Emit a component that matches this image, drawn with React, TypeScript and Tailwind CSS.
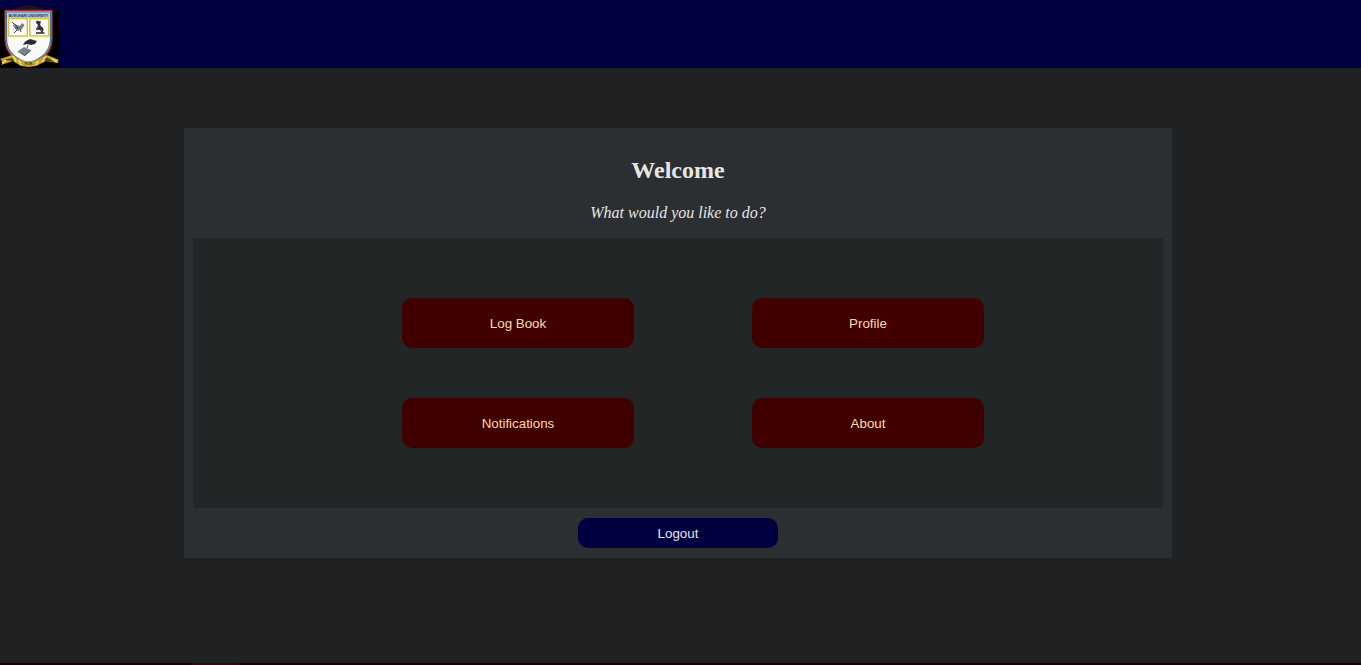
const actions = ["Log Book", "Profile", "Notifications", "About"];

function Crest() {
  return (
    <svg width="59" height="63" viewBox="0 5 59 63" className="block" aria-label="University crest">
      <ellipse cx="29" cy="19" rx="20" ry="14" fill="#15171c" />
      <rect x="0" y="10" width="59" height="58" fill="#000" />
      <path d="M5 10.500H52V39C52 51 44 61 28.500 64C13 61 5 51 5 39Z" fill="#d9bc34" stroke="#b3202c" strokeWidth="1.300" />
      <path d="M6.500 12.500H50.500V39C50.500 50 43 59 28.500 62.500C14 59 6.500 50 6.500 39Z" fill="#fafafa" stroke="#3b7da9" strokeWidth="1.300" />
      <rect x="7" y="12.500" width="43" height="5.500" fill="#a9cbdb" />
      <text x="28.500" y="16.800" textAnchor="middle" fontFamily="Liberation Sans, sans-serif" fontWeight="700" fontSize="3.400" fill="#103d62">BOROHARI UNIVERSITY</text>
      <rect x="8.500" y="18.600" width="18.800" height="17.400" fill="#fafafa" stroke="#e0c22c" strokeWidth="1.500" />
      <rect x="29.800" y="18.600" width="19" height="17.400" fill="#fafafa" stroke="#e0c22c" strokeWidth="1.500" />
      <path d="M12 22L17 25L20 26L22 23L24.500 25L22 29L18 31L14 28L16 26Z" fill="#777b80" />
      <path d="M12 22L18 28M13 25L18 29M17 30L14 33M20 29L21 32" stroke="#42464b" strokeWidth="1" />
      <path d="M36.500 20.500L41 21.500L40 25L43 28L41 31L37 28L38 25L36 23Z" fill="#34363b" />
      <path d="M36 29H40M36 33H44.500M42 28Q44 30 41 32" fill="none" stroke="#24272d" strokeWidth="1.500" />
      <path d="M26 41L30 39L37 41L35 44L31 45L27 44L23 45L24 43Z" fill="#292d32" />
      <path d="M18 51L24 47L31 50L25 56Z" fill="#7d8388" />
      <path d="M18 51.500L24.500 55.500L31 50.500M28 45L27 48" fill="none" stroke="#43484e" strokeWidth="0.900" />
      <path d="M0 59L12 55L18 59L24 61H34L40 59L47 55L58.500 59.500L58 63L46 61L36 66L29 67L21 66L13 61L1 65L3 62Z" fill="#c9a527" />
      <path d="M3 60L12 58L17 62L10 60.500M41 60L47 57.500L55 62L45 60.500Z" fill="#4d3e0e" />
      <path d="M13 56L16 62M19 60L21 65M38 61L36 65M46 56L42 62M2 63L6 60M52 59L57 62" stroke="#f5d94c" strokeWidth="2" />
      <text x="28.500" y="64.700" textAnchor="middle" fontFamily="Liberation Sans, sans-serif" fontWeight="700" fontSize="3.500" fill="#40340d">FOR</text>
    </svg>
  );
}

export default function App() {
  return (
    <div className="flex h-screen flex-col overflow-hidden bg-[#202123]">
      <header className="flex h-[68px] shrink-0 items-end bg-[#000040]">
        <Crest />
      </header>
      <main className="flex flex-1 flex-col">
        <section className="mt-[60px] ml-[184px] flex h-[430px] w-[988px] flex-col items-center bg-[#2b2f31] pt-7 text-[#e8e6e3]">
          <h1 className="font-['Liberation_Serif',serif] text-[24px] leading-7 font-bold">Welcome</h1>
          <p className="mt-5 font-['Liberation_Serif',serif] text-[16px] leading-[18px] italic">What would you like to do?</p>
          <div className="mt-4 h-[270px] w-[970px] shrink-0 bg-[#222627] pt-[60px] pl-[209px]">
            <div className="grid w-[582px] grid-cols-[232px_232px] justify-between gap-y-[50px]">
              {actions.map((action) => (
                <button key={action} className="h-[50px] rounded-[10px] bg-[#400000] pt-0.5 font-['Liberation_Sans',sans-serif] text-[13.333px] text-[#ffdd9e]">
                  {action}
                </button>
              ))}
            </div>
          </div>
          <button className="mt-2.5 h-[30px] w-[200px] shrink-0 rounded-[10px] bg-[#000040] pt-0.5 font-['Liberation_Sans',sans-serif] text-[13.333px] text-[#e8e6e3]">
            Logout
          </button>
        </section>
      </main>
      <footer className="flex h-0.5 shrink-0 bg-[#1b0006] pl-[191px]">
        <div className="h-full w-12 bg-[#480006]" />
      </footer>
    </div>
  );
}
